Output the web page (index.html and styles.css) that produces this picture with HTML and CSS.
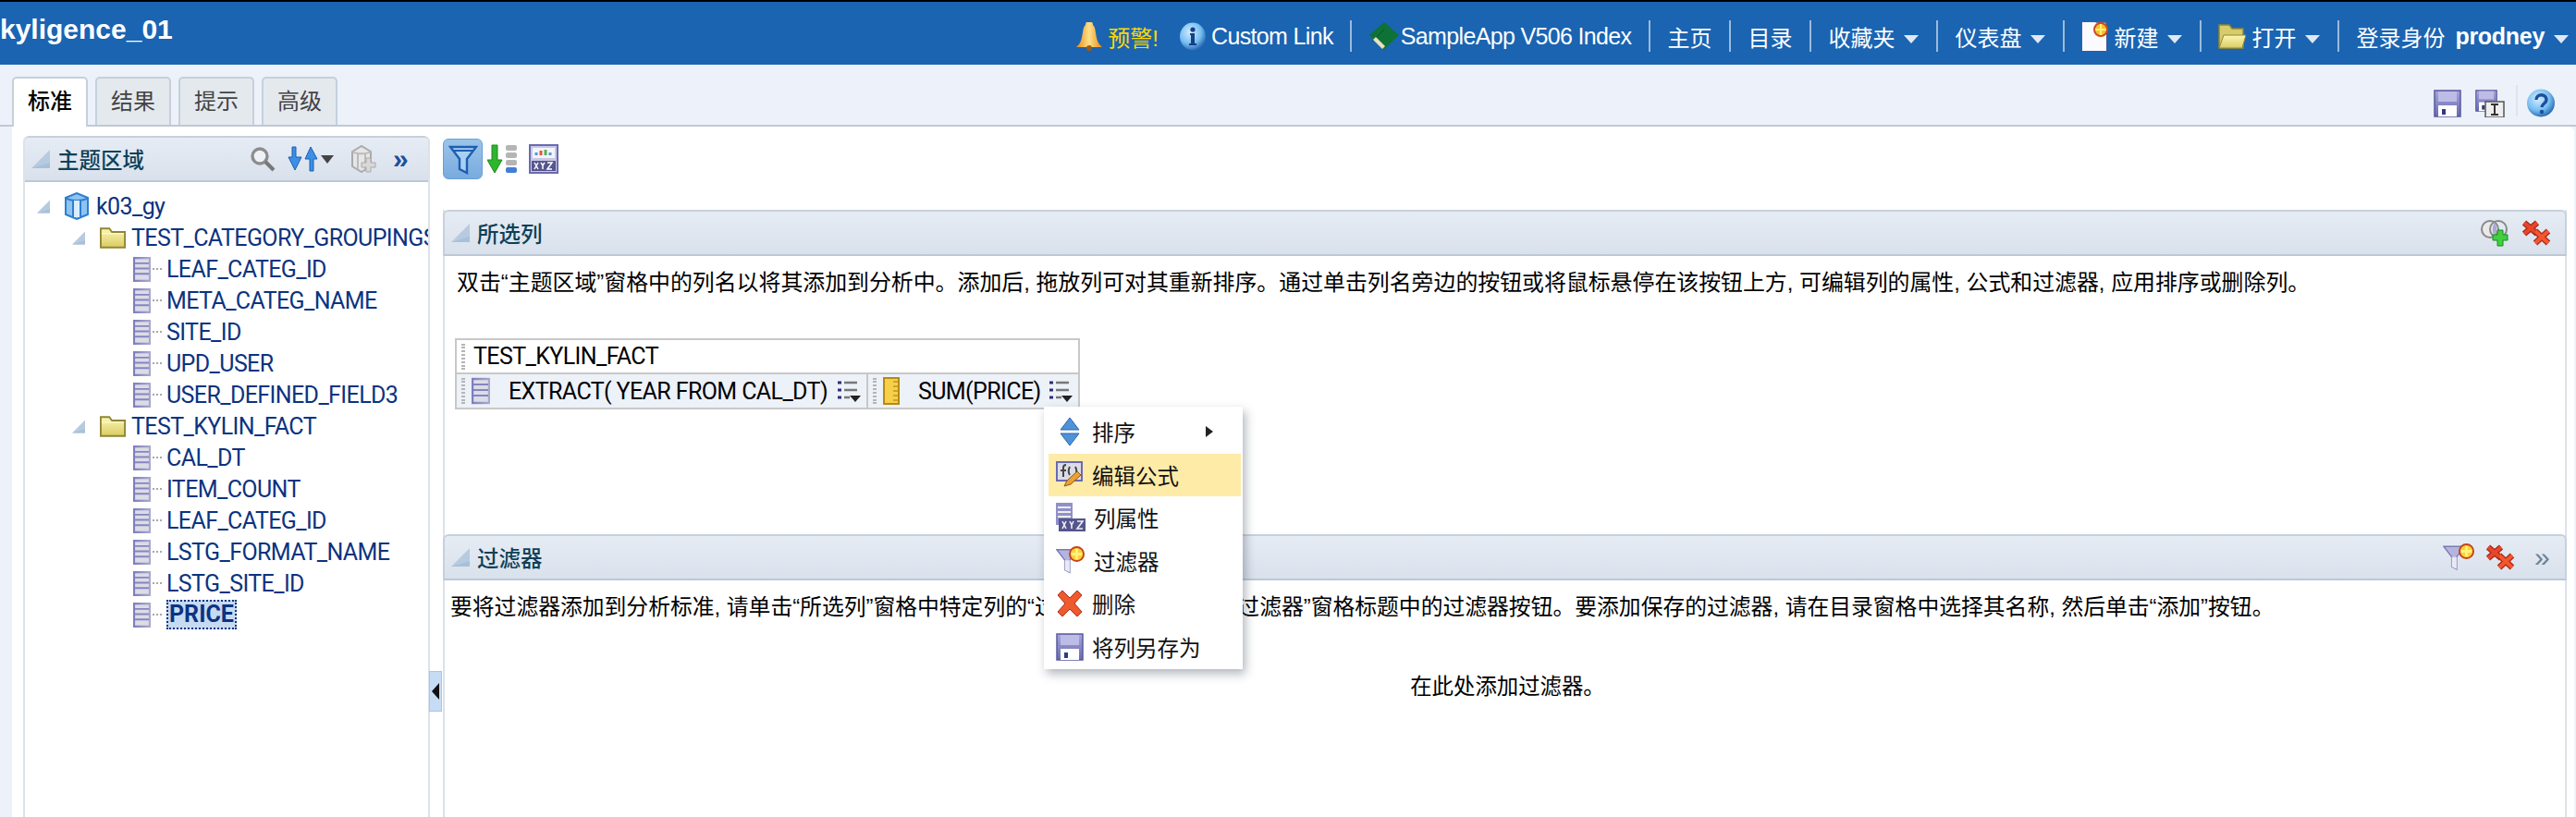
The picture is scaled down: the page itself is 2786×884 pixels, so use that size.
FILE: index.html
```html
<!DOCTYPE html>
<html>
<head>
  <meta charset="UTF-8">
  <title>kyligence_01</title>
  <link rel="stylesheet" href="styles.css">
</head>
<body>
  <!-- shared icons -->
  <svg class="defs" width="0" height="0">
    <defs>
      <linearGradient id="g-col" x1="0" x2="1" y1="0" y2="0"><stop offset="0" stop-color="#7d7dbf"/><stop offset="1" stop-color="#a9a9cf"/></linearGradient>
      <linearGradient id="g-folder" x1="0" x2="0" y1="0" y2="1"><stop offset="0" stop-color="#fdf7b4"/><stop offset="1" stop-color="#d9cb63"/></linearGradient>
      <linearGradient id="g-disk" x1="0" x2="0" y1="0" y2="1"><stop offset="0" stop-color="#a5a5dc"/><stop offset="1" stop-color="#6a6ab0"/></linearGradient>
      <radialGradient id="g-info" cx=".4" cy=".35" r=".7"><stop offset="0" stop-color="#d4edff"/><stop offset=".6" stop-color="#76bdf2"/><stop offset="1" stop-color="#1d5da8"/></radialGradient>
      <linearGradient id="g-bell" x1="0" x2="1" y1="0" y2="0"><stop offset="0" stop-color="#e88a12"/><stop offset=".5" stop-color="#fde08a"/><stop offset="1" stop-color="#e88a12"/></linearGradient>
      <symbol id="i-tri" viewBox="0 0 20 20"><path d="M20 0V20H0Z" fill="#b7cbe0"/><path d="M20 0V20H0L20 14Z" fill="#a9c0d9"/></symbol>
      <symbol id="i-col" viewBox="0 0 20 28">
        <rect x="1" y="1" width="18" height="26" fill="#dcdce6" stroke="url(#g-col)" stroke-width="2.4"/>
        <path d="M2 7h16M2 13h16M2 19h16" stroke="#8585c0" stroke-width="2"/>
      </symbol>
      <symbol id="i-folder" viewBox="0 0 30 26">
        <path d="M1 24V2h10l3 4h15v18Z" fill="url(#g-folder)" stroke="#8f8635" stroke-width="2"/>
        <path d="M2 8h26" stroke="#fffde0"/>
      </symbol>
      <symbol id="i-cube" viewBox="0 0 30 30">
        <path d="M3 6 15 1l12 5v18l-12 5-12-5Z" fill="#8ec3f2" stroke="#2e7fd0" stroke-width="2"/>
        <path d="M3 6c5 4 19 4 24 0M11 8v20M19 8v20" fill="none" stroke="#2e7fd0" stroke-width="2"/>
        <path d="M12 9h6v18h-6Z" fill="#d9eefe"/>
      </symbol>
      <symbol id="i-xx" viewBox="0 0 32 28">
        <path d="M3 3 17 15M17 3 3 15" stroke="#a82a18" stroke-width="6.5"/>
        <path d="M3 3 17 15M17 3 3 15" stroke="#e8452a" stroke-width="4"/>
        <path d="M15 12 29 25M29 12 15 25" stroke="#a82a18" stroke-width="6.5"/>
        <path d="M15 12 29 25M29 12 15 25" stroke="#f4562f" stroke-width="4"/>
      </symbol>
      <symbol id="i-funnel" viewBox="0 0 32 32">
        <path d="M1 2h26L17 15v15l-6-3V15Z" fill="#b4b4de" stroke="#7a7ab5" stroke-width="1.6"/>
        <path d="M11 15h6v15l-6-3Z" fill="#e9e9f6"/>
      </symbol>
      <symbol id="i-star" viewBox="0 0 18 18">
        <circle cx="9" cy="9" r="8" fill="#fbd13c" stroke="#c4421c" stroke-width="2"/>
        <path d="M9 3v12M3 9h12" stroke="#fff27a" stroke-width="3"/>
      </symbol>
      <symbol id="i-disk" viewBox="0 0 30 30">
        <path d="M1 1h28v28H1Z" fill="url(#g-disk)" stroke="#5a5aa0" stroke-width="1.5"/>
        <rect x="5" y="2" width="20" height="11" fill="#bcbce6"/>
        <rect x="5" y="17" width="20" height="12" fill="#fff"/>
        <rect x="9" y="21" width="4" height="6" fill="#333a80"/>
      </symbol>
      <symbol id="i-xyz" viewBox="0 0 32 32">
        <rect x="1" y="1" width="30" height="30" fill="#c8c8e6" stroke="#6a6ab0" stroke-width="2"/>
        <rect x="4" y="4" width="24" height="11" fill="#f4f4fb"/>
        <path d="M8 12V9M23 12V9" stroke="#4a9ad8" stroke-width="3"/>
        <path d="M13 12V7" stroke="#dc5a3c" stroke-width="3"/>
        <path d="M18 12V6" stroke="#58b058" stroke-width="3"/>
        <rect x="3" y="18" width="26" height="11" fill="#55558f"/>
        <path d="M6 20l4 7m0-7-4 7M13 20l2 3 2-3m-2 3v4M20 20h5l-5 7h5" stroke="#fff" stroke-width="1.5" fill="none"/>
      </symbol>
      <symbol id="i-opts" viewBox="0 0 26 24">
        <path d="M1 3h4M1 11h4M1 19h4" stroke="#2e2e78" stroke-width="3"/>
        <path d="M8 3h14M8 11h14M8 19h6" stroke="#777" stroke-width="2.4"/>
        <path d="M14 17h12l-6 7Z" fill="#222"/>
      </symbol>
    </defs>
  </svg>

  <header class="topbar">
    <span class="app-title">kyligence_01</span>
    <nav class="top-nav">
      <div class="nav-group">
        <a class="nav-item alert">
          <svg width="30" height="31" viewBox="0 0 30 31"><path d="M11 3a4 4 0 0 1 8 0c4 3 2 14 7 21 2 2 3 3 3 3H1s1-1 3-3C9 17 7 6 11 3Z" fill="url(#g-bell)"/><circle cx="15" cy="28" r="3" fill="#a5590c"/></svg>
          <span>预警!</span>
        </a>
        <a class="nav-item">
          <svg width="30" height="31" viewBox="0 0 30 31"><ellipse cx="15" cy="15.5" rx="14" ry="15" fill="url(#g-info)"/><circle cx="15" cy="8" r="2.6" fill="#153f86"/><path d="M12 12h5v11h2v2h-8v-2h2v-9h-1Z" fill="#153f86"/></svg>
          <span class="latin">Custom Link</span>
        </a>
      </div>
      <a class="nav-item nav-sep tight">
        <svg width="34" height="30" viewBox="0 0 34 30"><path d="M1 14 17 0l16 14-17 16Z" fill="#0e7236"/><path d="M4 21 17 8" stroke="#0a5127" stroke-width="1"/><path d="M5 19l10 10 3-3L8 16Z" fill="#e7dfc2"/></svg>
        <span class="latin">SampleApp V506 Index</span>
      </a>
      <a class="nav-item nav-sep">主页</a>
      <a class="nav-item nav-sep">目录</a>
      <a class="nav-item nav-sep">收藏夹<i class="caret"></i></a>
      <a class="nav-item nav-sep">仪表盘<i class="caret"></i></a>
      <a class="nav-item nav-sep">
        <svg width="30" height="33" viewBox="0 0 30 33"><path d="M1 1h26v31H1Z" fill="#e6e6f4" stroke="#55558f" stroke-width="1.5"/><path d="M1 1h14l12 12v19H1Z" fill="#fafaff"/><circle cx="21" cy="9" r="7" fill="#fbc02d" stroke="#cf4a1a" stroke-width="2"/><path d="M21 3v12M15 9h12" stroke="#fff27a" stroke-width="2"/></svg>
        <span>新建</span><i class="caret"></i>
      </a>
      <a class="nav-item nav-sep">
        <svg width="31" height="27" viewBox="0 0 31 27"><path d="M1 26V1h11l3 4h12v21Z" fill="#d8cb6c" stroke="#8f8635" stroke-width="1.5"/><path d="M1 26l5-14h24l-4 14Z" fill="url(#g-folder)" stroke="#8f8635"/></svg>
        <span>打开</span><i class="caret"></i>
      </a>
      <a class="nav-item nav-sep"><span>登录身份</span><b class="user-name">prodney</b><i class="caret"></i></a>
    </nav>
  </header>

  <div class="tabs-row">
    <div class="tabs">
      <span class="tab active">标准</span>
      <span class="tab">结果</span>
      <span class="tab">提示</span>
      <span class="tab">高级</span>
    </div>
    <div class="page-tools">
      <svg width="30" height="30"><use href="#i-disk"/></svg>
      <svg width="32" height="30" viewBox="0 0 32 30"><use href="#i-disk" width="24" height="24"/><rect x="11" y="13" width="20" height="17" fill="#eee" stroke="#555" stroke-width="1.5"/><path d="M17 16h8M17 27h8M21 16v11" stroke="#333" stroke-width="2"/></svg>
      <span class="tool-sep"></span>
      <svg width="32" height="31" viewBox="0 0 32 31"><ellipse cx="16" cy="15.5" rx="15" ry="15" fill="url(#g-info)"/><path d="M11 12c0-7 11-7 11 0 0 4-5 4-5 8" fill="none" stroke="#1c4f9c" stroke-width="3.4"/><circle cx="17" cy="25" r="2.2" fill="#1c4f9c"/></svg>
    </div>
  </div>

  <div class="content">
    <aside class="subject-pane">
      <div class="pane-head">
        <svg class="head-tri" width="20" height="20"><use href="#i-tri"/></svg>
        <span class="pane-title">主题区域</span>
        <div class="head-tools">
          <svg width="28" height="28" viewBox="0 0 28 28"><circle cx="11" cy="11" r="8" fill="#eef2f6" stroke="#8d8d8d" stroke-width="3.4"/><path d="M17 17l9 9" stroke="#777" stroke-width="4"/></svg>
          <span class="sort-tool">
            <svg width="33" height="28" viewBox="0 0 33 28"><path d="M9 1v11h6L8 26 1 12h4V1Z" fill="#3b8fe6" stroke="#1b5fb0"/><path d="M24 27V14h-5L25 1l7 13h-4v13Z" fill="#3b8fe6" stroke="#1b5fb0"/></svg>
            <svg width="14" height="9" viewBox="0 0 14 9"><path d="M0 0h14L7 9Z" fill="#444"/></svg>
          </span>
          <svg class="add-tool" width="30" height="30" viewBox="0 0 30 30"><path d="M4 7 14 1l10 6v16l-10 6-10-6Z" fill="#e6e6e6" stroke="#aaa" stroke-width="2"/><path d="M4 7c4 3 16 3 20 0M10 9v17M18 9v17" fill="none" stroke="#bbb" stroke-width="2"/><path d="M19 14h5v5h5v5h-5v5h-5v-5h-5v-5h5Z" fill="#d8d8d8" stroke="#aaa"/></svg>
          <span class="chevrons dark">»</span>
        </div>
      </div>
      <div class="tree">
        <div class="tree-row root">
          <svg class="twisty" width="14" height="15"><use href="#i-tri"/></svg>
          <svg width="30" height="30"><use href="#i-cube"/></svg>
          <span class="tree-label">k03_gy</span>
        </div>
        <div class="tree-row folder">
          <svg class="twisty" width="14" height="15"><use href="#i-tri"/></svg>
          <svg width="28" height="25"><use href="#i-folder"/></svg>
          <span class="tree-label">TEST_CATEGORY_GROUPINGS</span>
        </div>
        <div class="tree-row leaf"><svg width="19" height="27"><use href="#i-col"/></svg><i class="dots"></i><span class="tree-label">LEAF_CATEG_ID</span></div>
        <div class="tree-row leaf"><svg width="19" height="27"><use href="#i-col"/></svg><i class="dots"></i><span class="tree-label">META_CATEG_NAME</span></div>
        <div class="tree-row leaf"><svg width="19" height="27"><use href="#i-col"/></svg><i class="dots"></i><span class="tree-label">SITE_ID</span></div>
        <div class="tree-row leaf"><svg width="19" height="27"><use href="#i-col"/></svg><i class="dots"></i><span class="tree-label">UPD_USER</span></div>
        <div class="tree-row leaf"><svg width="19" height="27"><use href="#i-col"/></svg><i class="dots"></i><span class="tree-label">USER_DEFINED_FIELD3</span></div>
        <div class="tree-row folder">
          <svg class="twisty" width="14" height="15"><use href="#i-tri"/></svg>
          <svg width="28" height="25"><use href="#i-folder"/></svg>
          <span class="tree-label">TEST_KYLIN_FACT</span>
        </div>
        <div class="tree-row leaf"><svg width="19" height="27"><use href="#i-col"/></svg><i class="dots"></i><span class="tree-label">CAL_DT</span></div>
        <div class="tree-row leaf"><svg width="19" height="27"><use href="#i-col"/></svg><i class="dots"></i><span class="tree-label">ITEM_COUNT</span></div>
        <div class="tree-row leaf"><svg width="19" height="27"><use href="#i-col"/></svg><i class="dots"></i><span class="tree-label">LEAF_CATEG_ID</span></div>
        <div class="tree-row leaf"><svg width="19" height="27"><use href="#i-col"/></svg><i class="dots"></i><span class="tree-label">LSTG_FORMAT_NAME</span></div>
        <div class="tree-row leaf"><svg width="19" height="27"><use href="#i-col"/></svg><i class="dots"></i><span class="tree-label">LSTG_SITE_ID</span></div>
        <div class="tree-row leaf"><svg width="19" height="27"><use href="#i-col"/></svg><i class="dots"></i><span class="tree-label selected">PRICE</span></div>
      </div>
    </aside>

    <div class="collapse-handle"><i></i></div>

    <main class="work-area">
      <div class="work-tools">
        <span class="tool-btn on">
          <svg width="32" height="34" viewBox="0 0 32 34"><path d="M2 4h28L20 17v15l-8-4V17Z" fill="#a8d0f2" stroke="#1d5fb0" stroke-width="2.4"/><path d="M6 8h20" stroke="#1d5fb0" stroke-width="2"/></svg>
        </span>
        <svg width="33" height="32" viewBox="0 0 33 32"><path d="M5 1h6v16h5L8 31 0 17h5Z" fill="#2eb52e" stroke="#1d8a1d"/><rect x="20" y="1" width="12" height="6" rx="2" fill="#b5b5b5"/><rect x="20" y="9" width="12" height="6" rx="2" fill="#b5b5b5"/><rect x="20" y="17" width="12" height="6" rx="2" fill="#b5b5b5"/><rect x="20" y="25" width="12" height="6" rx="2" fill="#3f7fd8"/></svg>
        <svg class="tool-xyz" width="32" height="32"><use href="#i-xyz"/></svg>
      </div>

      <section class="panel columns-panel">
        <div class="pane-head panel-head">
          <svg class="head-tri" width="20" height="20"><use href="#i-tri"/></svg>
          <span class="pane-title">所选列</span>
          <div class="panel-tools">
            <svg width="32" height="30" viewBox="0 0 32 30"><circle cx="10" cy="11" r="9" fill="#e9e9e9" stroke="#888" stroke-width="2"/><circle cx="19" cy="11" r="9" fill="none" stroke="#888" stroke-width="2"/><path d="M15 4c-3 4-3 10 0 14 3-4 3-10 0-14Z" fill="#a9a9d8"/><path d="M18 12h6v5h5v6h-5v6h-6v-6h-5v-6h5Z" fill="#3fcf3f" stroke="#1d8a1d"/></svg>
            <svg width="32" height="28"><use href="#i-xx"/></svg>
          </div>
        </div>
        <div class="panel-body">
          <p class="help-line">双击“主题区域”窗格中的列名以将其添加到分析中。添加后, 拖放列可对其重新排序。通过单击列名旁边的按钮或将鼠标悬停在该按钮上方, 可编辑列的属性, 公式和过滤器, 应用排序或删除列。</p>
          <div class="crit-table">
            <div class="crit-folder"><i class="grip"></i><span class="crit-label">TEST_KYLIN_FACT</span></div>
            <div class="crit-cols">
              <div class="crit-col first">
                <i class="grip"></i>
                <svg width="20" height="30"><use href="#i-col"/></svg>
                <span class="crit-name crit-label">EXTRACT( YEAR FROM CAL_DT)</span>
                <svg class="opts" width="26" height="24"><use href="#i-opts"/></svg>
              </div>
              <div class="crit-col second">
                <i class="grip"></i>
                <svg width="18" height="30" viewBox="0 0 18 30"><rect x="1" y="1" width="16" height="28" fill="#f7cf4a" stroke="#b58a12" stroke-width="2"/><path d="M11 5h5M11 10h5M11 15h5M11 20h5M11 25h5" stroke="#9c7a12"/></svg>
                <span class="crit-name crit-label">SUM(PRICE)</span>
                <svg class="opts" width="26" height="24"><use href="#i-opts"/></svg>
              </div>
            </div>
          </div>
        </div>
      </section>

      <section class="panel filters-panel">
        <div class="pane-head panel-head">
          <svg class="head-tri" width="20" height="20"><use href="#i-tri"/></svg>
          <span class="pane-title">过滤器</span>
          <div class="panel-tools filter-tools">
            <svg width="34" height="31" viewBox="0 0 34 31"><use href="#i-funnel" width="28" height="31"/><use href="#i-star" x="17" y="0" width="17" height="17"/></svg>
            <svg width="32" height="28"><use href="#i-xx"/></svg>
            <span class="chevrons">»</span>
          </div>
        </div>
        <div class="panel-body filter-body">
          <p class="help-line">要将过滤器添加到分析标准, 请单击“所选列”窗格中特定列的“过滤器”按钮, 或单击“过滤器”窗格标题中的过滤器按钮。要添加保存的过滤器, 请在目录窗格中选择其名称, 然后单击“添加”按钮。</p>
          <p class="empty-hint">在此处添加过滤器。</p>
        </div>
      </section>
    </main>
  </div>

  <!-- column options menu, open over the panels -->
  <div class="col-menu">
    <div class="menu-item">
      <svg width="30" height="32" viewBox="0 0 30 32"><path d="M15 1l10 13H5Z" fill="#4e93d8" stroke="#2a66ad"/><path d="M15 31 5 18h20Z" fill="#4e93d8" stroke="#2a66ad"/></svg>
      <span>排序</span><i class="menu-arrow"></i>
    </div>
    <div class="menu-item hot">
      <svg width="30" height="30" viewBox="0 0 30 30"><rect x="1" y="1" width="27" height="20" fill="#dcdce8" stroke="#6a6ab0" stroke-width="2"/><path d="M8 17V7c0-2 1-3 3-3M5 10h6M15 6c-2 4-2 6 0 9M21 6c2 4 2 6 0 9" fill="none" stroke="#444" stroke-width="2"/><path d="M9 27l3-6 11-10 4 4-11 10Z" fill="#f0a030" stroke="#8a5a10"/></svg>
      <span>编辑公式</span>
    </div>
    <div class="menu-item">
      <svg width="32" height="32" viewBox="0 0 32 32"><rect x="0" y="0" width="18" height="24" fill="#9090c8"/><path d="M2 5h14M2 10h14M2 15h14" stroke="#eee" stroke-width="2"/><rect x="3" y="17" width="29" height="14" fill="#55558f"/><path d="M7 20l4 8m0-8-4 8M15 20l2 4 2-4m-2 4v4M23 20h6l-6 8h6" stroke="#eee" stroke-width="1.6" fill="none"/></svg>
      <span>列属性</span>
    </div>
    <div class="menu-item">
      <svg width="32" height="32" viewBox="0 0 32 32"><use href="#i-funnel" width="28" height="32"/><use href="#i-star" x="14" y="0" width="17" height="17"/></svg>
      <span>过滤器</span>
    </div>
    <div class="menu-item">
      <svg width="30" height="30" viewBox="0 0 30 30"><path d="M2 6 7 1l8 8 8-8 5 5-8 9 8 9-5 5-8-8-8 8-5-5 8-9Z" fill="#ee5a2e" stroke="#b02c18"/></svg>
      <span>删除</span>
    </div>
    <div class="menu-item">
      <svg width="30" height="30"><use href="#i-disk"/></svg>
      <span>将列另存为</span>
    </div>
  </div>
</body>
</html>
```

FILE: styles.css
```css
* {
  box-sizing: border-box;
}

html, body {
  margin: 0;
  height: 884px;
  overflow: hidden;
}

body {
  position: relative;
  background: #edf1f9;
  font-family: "Liberation Sans", "Noto Sans CJK SC", sans-serif;
  font-size: 24px;
  color: #000;
}

.defs {
  position: absolute;
}

svg {
  flex: none;
  display: block;
}

/* top bar */
.topbar {
  height: 70px;
  border-top: 2px solid #000;
  background: #1a64b2;
  color: #fff;
  display: flex;
  align-items: center;
  justify-content: space-between;
  padding-right: 8px;
}

.app-title {
  font-size: 30px;
  font-weight: bold;
  margin-top: -8px;
}

.top-nav {
  display: flex;
  align-items: center;
  height: 34px;
  margin-top: 6px;
}

.nav-group {
  display: flex;
  gap: 22px;
  padding-right: 18px;
}

.nav-item {
  display: flex;
  align-items: center;
  gap: 5px;
  height: 34px;
  white-space: nowrap;
}

.latin {
  font-size: 25px;
  letter-spacing: -0.65px;
}

.nav-sep {
  border-left: 2px solid #9dbad9;
  padding: 0 19px 0 18px;
}

.nav-sep.tight {
  gap: 1px;
}

.nav-sep:last-child {
  padding-right: 0;
}

.alert {
  color: #ffd800;
}

.caret {
  width: 0;
  height: 0;
  margin-left: 5px;
  margin-top: 6px;
  border-left: 8px solid transparent;
  border-right: 8px solid transparent;
  border-top: 9px solid #dfe8f3;
}

.user-name {
  margin-left: 6px;
  font-size: 25px;
  letter-spacing: -0.3px;
}

/* tabs */
.tabs-row {
  height: 67px;
  border-top: 1px solid #fff;
  border-bottom: 2px solid #c0c8d6;
  display: flex;
  justify-content: space-between;
  align-items: flex-end;
  padding-left: 13px;
  padding-right: 22px;
}

.tabs {
  display: flex;
  gap: 8px;
}

.tab {
  width: 82px;
  height: 52px;
  line-height: 50px;
  margin-bottom: -2px;
  text-align: center;
  color: #444;
  background: #e4e9ee;
  border: 2px solid #c5d0dc;
  border-bottom: 0;
  border-radius: 5px 5px 0 0;
}

.tab.active {
  height: 54px;
  color: #000;
  background: #fff;
  font-weight: 500;
  position: relative;
}

.page-tools {
  display: flex;
  align-items: center;
  gap: 15px;
  margin-bottom: 8px;
}

.tool-sep {
  width: 2px;
  height: 34px;
  margin: -6px -6px 0 -3px;
  background: #dfe5ef;
}

/* main area */
.content {
  position: relative;
  height: 747px;
  margin: 0 2px 0 13px;
  padding: 10px 8px 0 12px;
  background: #fff;
  border-radius: 0 6px 0 0;
  display: flex;
  gap: 14px;
}

.subject-pane {
  width: 440px;
  flex: none;
  border: 2px solid #dbe2ea;
  border-top: 0;
  border-bottom: 0;
  border-radius: 6px 6px 0 0;
  overflow: hidden;
}

.pane-head {
  height: 50px;
  margin: 0 -2px;
  padding: 0 10px 0 7px;
  border: 2px solid #c7d1dc;
  border-bottom-color: #bcc8d6;
  border-radius: 6px 6px 0 0;
  background: linear-gradient(#e6ecf4, #d9e1ec);
  display: flex;
  align-items: center;
  color: #0e4057;
}

.head-tri {
  margin-right: 8px;
}

.pane-title {
  font-size: 23.5px;
  font-weight: 500;
}

.head-tools {
  margin-left: auto;
  display: flex;
  align-items: center;
  gap: 14px;
  margin-right: 10px;
}

.sort-tool {
  display: flex;
  align-items: center;
  gap: 3px;
  margin-left: -1px;
}

.add-tool {
  margin-left: 2px;
}

.chevrons {
  width: 18px;
  font-size: 30px;
  line-height: 24px;
  color: #6f7f93;
}

.chevrons.dark {
  margin-left: 4px;
  color: #1d4f9c;
  font-weight: bold;
}

/* subject tree */
.tree {
  padding-top: 9px;
  color: #0b3380;
  font-family: Roboto, "Liberation Sans", sans-serif;
  font-size: 25px;
  letter-spacing: -0.6px;
}

.tree-row {
  height: 34px;
  display: flex;
  align-items: center;
  white-space: nowrap;
}

.tree-row.root {
  padding-left: 13px;
}

.tree-row.folder {
  padding-left: 51px;
}

.tree-row.leaf {
  padding-left: 117px;
}

.twisty {
  margin-right: 14px;
}

.folder .twisty {
  margin-right: 16px;
}

.root .tree-label {
  margin-left: 6px;
}

.folder .tree-label {
  margin-left: 6px;
}

.dots {
  width: 10px;
  margin-left: 2px;
  margin-right: 5px;
  border-top: 2px dotted #a8a8a8;
}

.selected {
  font-weight: bold;
  background: #c6dbf2;
  outline: 2px dotted #0b3380;
  outline-offset: -2px;
  padding: 0 3px;
  height: 32px;
  line-height: 32px;
  letter-spacing: 0;
}

.collapse-handle {
  position: absolute;
  left: 451px;
  top: 589px;
  width: 14px;
  height: 44px;
  background: #c6dcf4;
  border: 1px solid #a9c6e6;
  display: flex;
  align-items: center;
  justify-content: center;
}

.collapse-handle i {
  border-top: 9px solid transparent;
  border-bottom: 9px solid transparent;
  border-right: 8px solid #111;
}

/* right side */
.work-area {
  flex: 1;
  min-width: 0;
  padding-top: 3px;
  display: flex;
  flex-direction: column;
}

.work-tools {
  height: 44px;
  margin-bottom: 33px;
  display: flex;
  align-items: center;
  gap: 5px;
}

.tool-btn {
  width: 43px;
  height: 44px;
  background: linear-gradient(#9cc4ea, #78abdf);
  border: 1px solid #6a9fd4;
  border-radius: 6px;
  display: flex;
  align-items: center;
  justify-content: center;
}

.tool-xyz {
  margin-left: 7px;
}

.panel {
  border: 2px solid #dbe2ea;
  border-top: 0;
  border-bottom: 0;
}

.columns-panel {
  height: 351px;
}

.filters-panel {
  flex: 1;
}

.panel-head {
  padding-right: 15px;
}

.panel-tools {
  margin-left: auto;
  display: flex;
  align-items: center;
  gap: 12px;
}

.filter-tools .chevrons {
  margin-left: 9px;
}

.panel-body {
  padding: 14px 0 0 13px;
}

.filter-body {
  padding-left: 6px;
  font-size: 23.8px;
}

.help-line {
  margin: 0;
  line-height: 30px;
  font-size: 23.9px;
  white-space: nowrap;
}

.filter-body .help-line {
  font-size: 23.8px;
}

.crit-table {
  width: 676px;
  margin-top: 45px;
  margin-left: -2px;
  border: 2px solid #c8c8c8;
}

.crit-folder {
  height: 35px;
  line-height: 34px;
  display: flex;
  align-items: center;
  padding-left: 5px;
  gap: 9px;
}

.crit-label {
  font-family: Roboto, "Liberation Sans", sans-serif;
  font-size: 25px;
  letter-spacing: -0.6px;
}

.grip {
  width: 4px;
  height: 28px;
  flex: none;
  border-left: 2px dotted #b5b5b5;
  border-right: 2px dotted #b5b5b5;
}

.crit-cols {
  display: flex;
  height: 38px;
  border-top: 2px solid #c8c8c8;
}

.crit-col {
  display: flex;
  align-items: center;
  background: #edf1f8;
  padding-left: 5px;
}

.crit-col.first {
  width: 445px;
  border-right: 2px solid #c8c8c8;
}

.crit-col.second {
  flex: 1;
}

.crit-col svg:first-of-type {
  margin-left: 7px;
}

.crit-name {
  margin-left: 20px;
  white-space: nowrap;
}

.opts {
  margin-left: auto;
  margin-right: 6px;
}

.empty-hint {
  margin: 56px 0 0;
  line-height: 30px;
  font-size: 23.4px;
  text-align: center;
}

/* popup menu */
.col-menu {
  position: absolute;
  left: 1129px;
  top: 440px;
  width: 215px;
  height: 284px;
  padding: 4px 2px 0 5px;
  background: #fff;
  box-shadow: 3px 5px 10px rgba(60, 70, 90, 0.4);
  font-size: 23.5px;
  color: #111;
}

.menu-item {
  height: 46.5px;
  padding-left: 8px;
  display: flex;
  align-items: center;
  gap: 9px;
}

.menu-item.hot {
  background: #feeba8;
}

.menu-arrow {
  margin-left: auto;
  margin-right: 30px;
  border-top: 6px solid transparent;
  border-bottom: 6px solid transparent;
  border-left: 8px solid #222;
}
```
